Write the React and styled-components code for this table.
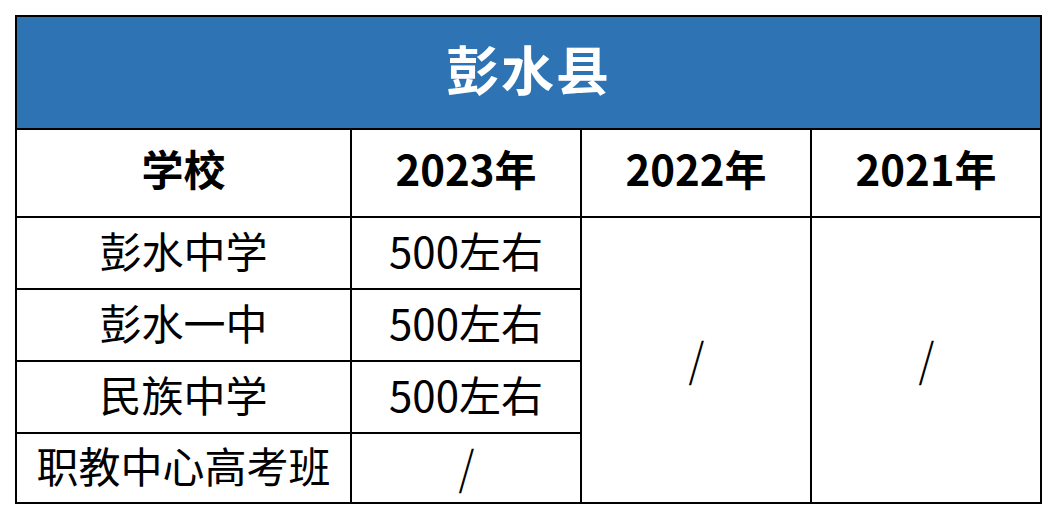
import React from "react";
import styled, { createGlobalStyle } from "styled-components";

const GlobalStyle = createGlobalStyle`
  html, body {
    margin: 0;
    padding: 0;
    background: #fff;
  }
`;

const Page = styled.div`
  padding: 15px;
  font-family: "Noto Sans CJK SC", "Noto Sans", sans-serif;
`;

const Table = styled.table`
  width: 1026px;
  border-collapse: collapse;
  table-layout: fixed;
  color: #000;
`;

const Cell = styled.td`
  border: 2px solid #000;
  padding: 0 0 ${(p) => (p.$bold ? 10 : 6)}px;
  text-align: center;
  vertical-align: middle;
  font-size: 42px;
  font-weight: ${(p) => (p.$bold ? 700 : 400)};
  line-height: 1;
  white-space: nowrap;
`;

const TitleCell = styled.th`
  border: 2px solid #000;
  background: #2e74b5;
  color: #fff;
  font-size: 53px;
  font-weight: 700;
  letter-spacing: 2px;
  padding: 0 0 8px;
  line-height: 1;
`;

const Row = styled.tr`
  height: ${(p) => p.$h}px;
`;

const Slash = styled.span`
  display: inline-block;
  font-family: "Noto Sans CJK SC", "DejaVu Sans", sans-serif;
  font-size: 46px;
  font-weight: 300;
  transform: skewX(3deg);
`;

const rows = [
  { school: "彭水中学", y2023: "500左右" },
  { school: "彭水一中", y2023: "500左右" },
  { school: "民族中学", y2023: "500左右" },
  { school: "职教中心高考班", y2023: null },
];

export default function App() {
  return (
    <Page>
      <GlobalStyle />
      <Table>
        <colgroup>
          <col style={{ width: 335 }} />
          <col style={{ width: 230 }} />
          <col style={{ width: 230 }} />
          <col style={{ width: 230 }} />
        </colgroup>
        <thead>
          <Row $h={113}>
            <TitleCell colSpan={4}>彭水县</TitleCell>
          </Row>
        </thead>
        <tbody>
          <Row $h={88}>
            <Cell $bold>学校</Cell>
            <Cell $bold>2023年</Cell>
            <Cell $bold>2022年</Cell>
            <Cell $bold>2021年</Cell>
          </Row>
          {rows.map((r, i) => (
            <Row key={r.school} $h={i === 3 ? 70 : 72}>
              <Cell>{r.school}</Cell>
              <Cell>{r.y2023 ? r.y2023 : <Slash>/</Slash>}</Cell>
              {i === 0 && (
                <>
                  <Cell rowSpan={4}>
                    <Slash>/</Slash>
                  </Cell>
                  <Cell rowSpan={4}>
                    <Slash>/</Slash>
                  </Cell>
                </>
              )}
            </Row>
          ))}
        </tbody>
      </Table>
    </Page>
  );
}
